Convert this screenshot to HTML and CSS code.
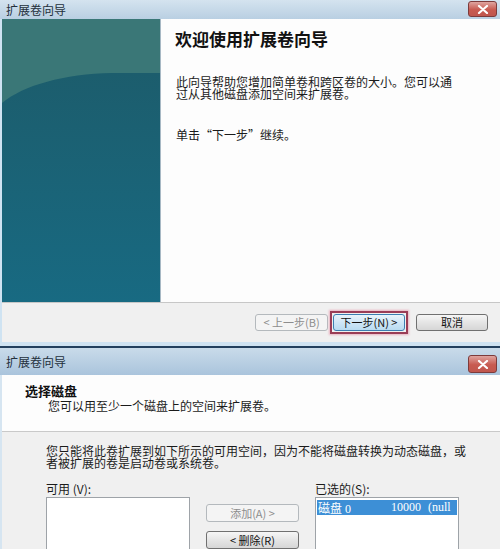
FILE: index.html
```html
<!DOCTYPE html>
<html lang="zh-CN">
<head>
  <meta charset="utf-8">
  <title>扩展卷向导</title>
  <link rel="stylesheet" href="styles.css">
</head>
<body>
  <div class="win win-welcome">
    <div class="titlebar">
      <span class="title">扩展卷向导</span>
      <span class="close-btn">
        <svg width="12" height="9" viewBox="0 0 12 9"><path d="M2 1 L10 8 M10 1 L2 8" stroke="#fff" stroke-width="2.2" stroke-linecap="round"/></svg>
      </span>
    </div>
    <div class="frame">
      <div class="wizard-body">
        <div class="banner">
          <svg width="158" height="283" viewBox="0 0 158 283">
            <defs>
              <linearGradient id="teal" x1="0" y1="0" x2="0" y2="1">
                <stop offset="0" stop-color="#1d5a68"/>
                <stop offset="1" stop-color="#186a82"/>
              </linearGradient>
            </defs>
            <rect width="158" height="283" fill="url(#teal)"/>
            <path d="M0 0 H158 V54 L110 54 C62 55 22 66 0 84 Z" fill="#3a7777"/>
          </svg>
        </div>
        <div class="welcome">
          <h1>欢迎使用扩展卷向导</h1>
          <p>此向导帮助您增加简单卷和跨区卷的大小。您可以通<br>过从其他磁盘添加空间来扩展卷。</p>
          <p class="hint">单击“下一步”继续。</p>
        </div>
      </div>
      <div class="button-bar">
        <button class="btn" disabled>&lt; 上一步(B)</button>
        <span class="focus-ring"><button class="btn btn-hot">下一步(N) &gt;</button></span>
        <button class="btn btn-cancel">取消</button>
      </div>
    </div>
  </div>

  <div class="win win-disk">
    <div class="titlebar titlebar-tall">
      <span class="title">扩展卷向导</span>
      <span class="close-btn">
        <svg width="12" height="9" viewBox="0 0 12 9"><path d="M2 1 L10 8 M10 1 L2 8" stroke="#fff" stroke-width="2.2" stroke-linecap="round"/></svg>
      </span>
    </div>
    <div class="frame">
      <div class="page-header">
        <h2>选择磁盘</h2>
        <div class="subtitle">您可以用至少一个磁盘上的空间来扩展卷。</div>
      </div>
      <div class="page-content">
        <p>您只能将此卷扩展到如下所示的可用空间，因为不能将磁盘转换为动态磁盘，或<br>者被扩展的卷是启动卷或系统卷。</p>
        <div class="picker">
          <label class="pick-label">可用 (V):</label>
          <span></span>
          <label class="pick-label">已选的(S):</label>
          <div class="listbox"></div>
          <div class="move-buttons">
            <button class="btn btn-wide" disabled>添加(A) &gt;</button>
            <button class="btn btn-wide">&lt; 删除(R)</button>
          </div>
          <div class="listbox">
            <div class="list-row selected">
              <span class="col-name">磁盘 0</span>
              <span class="col-size">10000</span>
              <span class="col-free">(null</span>
            </div>
          </div>
        </div>
      </div>
    </div>
  </div>
</body>
</html>
```

FILE: styles.css
```css
html, body {
  margin: 0;
  padding: 0;
}

body {
  width: 500px;
  height: 549px;
  overflow: hidden;
  background: #cfe0ee;
  font-family: "Noto Sans CJK SC", "Noto Sans", sans-serif;
  font-size: 12px;
  color: #1b1b1b;
}

.win {
  background: #d6e5f1;
}

.titlebar {
  height: 19px;
  display: flex;
  align-items: center;
  justify-content: space-between;
  padding: 0 3px 0 6px;
  background: linear-gradient(#d4e3ef, #b9cfe2);
}

.titlebar-tall {
  height: 27px;
  background: linear-gradient(#c9dbea, #aac4dc);
  border-top: 2px solid #23405e;
}

.title {
  font-size: 12px;
  line-height: 12px;
  color: #24303c;
}

.close-btn {
  width: 29px;
  height: 16px;
  box-sizing: border-box;
  border: 1px solid #7d3b3b;
  border-radius: 3px;
  background: linear-gradient(#dfa5a0, #c85a50 55%, #c0574e);
  display: flex;
  align-items: center;
  justify-content: center;
}

.win-welcome .close-btn {
  align-self: flex-start;
  margin-top: 1px;
}

.win-disk .close-btn {
  align-self: flex-start;
  margin-top: 7px;
  height: 18px;
}

.frame {
  padding-left: 2px;
}

.win-welcome .frame {
  padding-bottom: 4px;
  background: #cfe3f2;
}

/* welcome page */

.wizard-body {
  display: flex;
  height: 283px;
  background: #fdfdfd;
}

.banner {
  width: 158px;
  height: 283px;
  flex: none;
}

.banner svg {
  display: block;
}

.welcome {
  padding: 10px 0 0 14px;
  border-left: 1px solid #a7b8c4;
}

.welcome h1 {
  margin: 0;
  font-size: 17px;
  line-height: 20px;
  font-weight: bold;
  color: #111;
}

.welcome p {
  margin: 27px 0 0 1px;
  font-size: 12px;
  line-height: 12px;
}

.welcome .hint {
  margin-top: 29px;
}

.button-bar {
  height: 39px;
  border-top: 1px solid #c7c7c7;
  background: #f0f0f0;
  display: flex;
  align-items: center;
  justify-content: flex-end;
  padding-right: 12px;
}

.btn {
  font-family: "Noto Sans CJK SC", "Noto Sans", sans-serif;
  font-size: 11px;
  line-height: 13px;
  height: 17px;
  width: 73px;
  padding: 0;
  border: 1px solid #707070;
  border-radius: 3px;
  background: linear-gradient(#f6f6f6, #e5e5e5 50%, #d6d6d6);
  color: #111;
}

.btn:disabled {
  border-color: #b4b9bd;
  background: #f4f4f4;
  color: #8d8d8d;
}

.focus-ring {
  display: inline-flex;
  margin-left: 2px;
  padding: 1px;
  border: 2px solid #9a3d56;
  box-shadow: 0 0 2px 1px #eab0bf;
}

.btn-hot {
  width: 72px;
  border-color: #3c7fb1;
  background: linear-gradient(#e9f4fb, #cfe6f6 50%, #b9dbf1);
}

.btn-cancel {
  width: 72px;
  margin-left: 8px;
}

/* select disk page */

.page-header {
  height: 57px;
  background: #fdfdfd;
  border-bottom: 1px solid #c9c9c9;
  padding-left: 23px;
  box-sizing: border-box;
}

.page-header h2 {
  margin: 0;
  padding-top: 8px;
  font-size: 13px;
  line-height: 16px;
  font-weight: bold;
  color: #111;
}

.subtitle {
  margin: 0 0 0 23px;
  font-size: 12px;
  line-height: 14px;
}

.page-content {
  background: #f0f0f0;
  padding: 13px 0 0 44px;
  height: 120px;
}

.page-content p {
  margin: 0;
  font-size: 12px;
  line-height: 12px;
}

.picker {
  display: grid;
  grid-template-columns: 144px 93px 144px;
  column-gap: 16px;
  margin-top: 14px;
}

.pick-label {
  font-size: 12px;
  line-height: 12px;
  margin-bottom: 2px;
}

.listbox {
  height: 70px;
  box-sizing: border-box;
  border: 1px solid #9ea3a8;
  background: #fff;
  padding: 2px 1px;
}

.move-buttons {
  display: flex;
  flex-direction: column;
  gap: 9px;
  padding-top: 7px;
}

.btn-wide {
  width: 93px;
  height: 18px;
}

.list-row {
  display: flex;
  height: 15px;
  align-items: center;
  font-family: "Liberation Serif", "Noto Sans CJK SC", serif;
  font-size: 12px;
  white-space: nowrap;
  overflow: hidden;
}

.list-row.selected {
  background: #3d8fd6;
  color: #fff;
}

.col-name {
  width: 73px;
  padding-left: 1px;
}

.col-size {
  width: 37px;
}
```
